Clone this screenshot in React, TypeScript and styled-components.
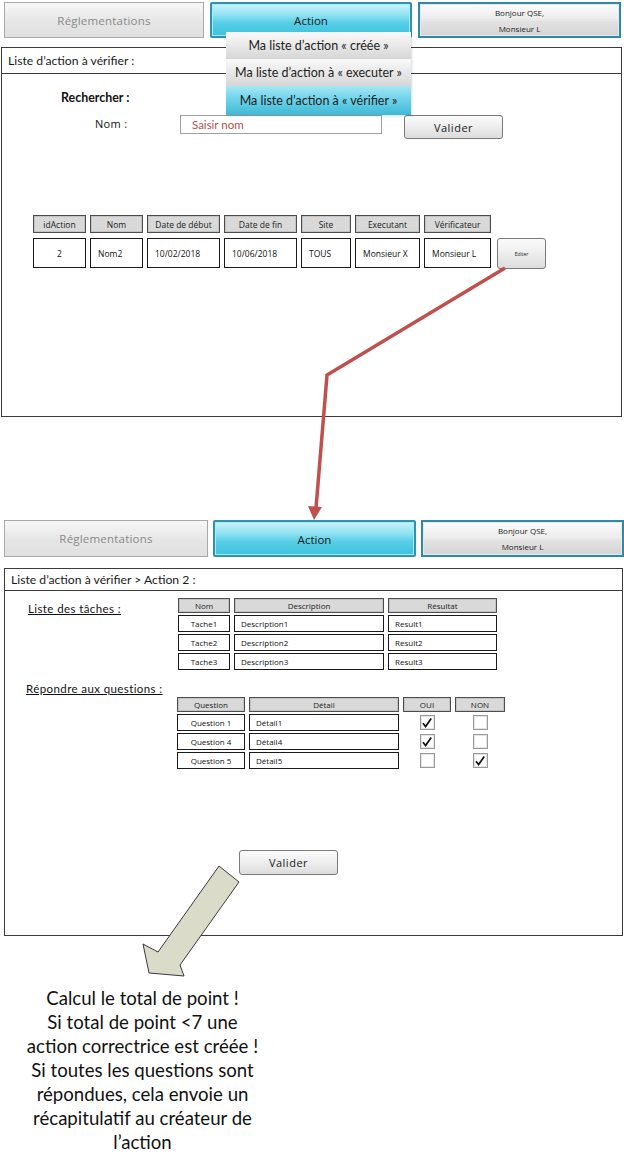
import React from 'react';
import styled, { createGlobalStyle } from 'styled-components';

const GlobalStyle = createGlobalStyle`
  html, body { margin: 0; padding: 0; background: #ffffff; }
  body { font-family: "Open Sans", "DejaVu Sans", sans-serif; color: #1a1a1a; }
  * { box-sizing: border-box; }
`;

const Page = styled.div`
  position: relative;
  width: 624px;
  height: 1164px;
  overflow: hidden;
  background: #fff;
`;

const Screen = styled.section<{ $mt: number; $ml: number }>`
  margin-top: ${(p) => p.$mt}px;
  padding-left: ${(p) => p.$ml}px;
`;

const TabBar = styled.div<{ $h: number; $gap: number }>`
  display: flex;
  gap: ${(p) => p.$gap}px;
  height: ${(p) => p.$h}px;
  padding-left: 4px;
`;

const GrayTab = styled.div<{ $w: number }>`
  width: ${(p) => p.$w}px;
  height: 100%;
  border: 1px solid #a9a9a9;
  background: linear-gradient(#f7f7f7, #e6e6e6 55%, #e0e0e0);
  display: flex;
  align-items: center;
  justify-content: center;
  font-size: 11.5px;
  color: #8a8a8a;
  letter-spacing: 0.2px;
`;

const ActionTab = styled.div<{ $w: number }>`
  position: relative;
  width: ${(p) => p.$w}px;
  height: 100%;
  border: 2px solid #2f93ad;
  border-radius: 2px;
  background: linear-gradient(#c9f3fa 0%, #8fe2f2 35%, #56cde6 60%, #3fc2df 100%);
  box-shadow: inset 0 0 0 1px #a6ecf7;
  display: flex;
  align-items: center;
  justify-content: center;
  padding-top: 1px;
  font-size: 11.5px;
  color: #1b1b1b;
`;

const UserTab = styled.div<{ $w: number }>`
  width: ${(p) => p.$w}px;
  height: 100%;
  border: 2px solid #2f8ba3;
  background: #f2f2f2;
  display: grid;
  grid-template-rows: 1fr 1fr;
`;

const UserLine = styled.div<{ $shade: boolean }>`
  display: flex;
  align-items: center;
  justify-content: center;
  font-size: 8px;
  color: #222;
  background: ${(p) => (p.$shade ? 'linear-gradient(#e2e2e2, #d6d6d6)' : 'linear-gradient(#fbfbfb, #ececec)')};
  border: 1px solid #e8e8e8;
`;

const Dropdown = styled.div`
  position: absolute;
  left: 14px;
  top: 28px;
  width: 185px;
  z-index: 5;
  display: flex;
  flex-direction: column;
  box-shadow: 1px 1px 2px rgba(0, 0, 0, 0.15);
`;

const DropItem = styled.div<{ $active?: boolean; $h: number }>`
  height: ${(p) => p.$h}px;
  display: flex;
  align-items: center;
  justify-content: center;
  font-family: "Lato", "Open Sans", sans-serif;
  font-size: 12.5px;
  color: #1e1e1e;
  background: ${(p) =>
    p.$active
      ? 'linear-gradient(#a5e8f4, #6fd3e9 45%, #3eb9d6 100%)'
      : 'linear-gradient(#fafafa, #e8e8e8 50%, #d6d6d6 100%)'};
`;

const Panel = styled.div<{ $mt: number; $w: number; $h: number; $ml: number }>`
  margin-top: ${(p) => p.$mt}px;
  margin-left: ${(p) => p.$ml}px;
  width: ${(p) => p.$w}px;
  height: ${(p) => p.$h}px;
  border: 1px solid #3a3a3a;
  display: flex;
  flex-direction: column;
`;

const PanelHeader = styled.div<{ $h: number }>`
  height: ${(p) => p.$h}px;
  flex: none;
  border-bottom: 1px solid #3a3a3a;
  display: flex;
  align-items: center;
  padding-left: 6px;
  font-family: "Lato", "Open Sans", sans-serif;
  font-size: 12.2px;
  color: #1a1a1a;
`;

const PanelBody = styled.div<{ $pt: number }>`
  display: flex;
  flex-direction: column;
  padding-top: ${(p) => p.$pt}px;
`;

const SectionTitle = styled.div`
  margin-left: 59px;
  font-family: "Lato", "Open Sans", sans-serif;
  font-weight: 700;
  font-size: 12.4px;
  line-height: 15px;
  color: #111;
`;

const SearchRow = styled.div`
  margin-top: 10px;
  display: flex;
  align-items: flex-start;
  padding-left: 93px;
`;

const FieldLabel = styled.div`
  width: 85px;
  line-height: 18px;
  font-size: 11px;
  letter-spacing: 0.3px;
  color: #111;
`;

const TextInput = styled.div`
  width: 202px;
  height: 19px;
  border: 1px solid #a0a0a0;
  padding-left: 11px;
  display: flex;
  align-items: center;
  font-family: "Lato", "Open Sans", sans-serif;
  font-size: 11.5px;
  color: #b5504a;
`;

const Button = styled.div<{ $w: number; $h: number; $small?: boolean }>`
  width: ${(p) => p.$w}px;
  height: ${(p) => p.$h}px;
  border: 1px solid #7a7a7a;
  border-radius: 3px;
  background: linear-gradient(#fbfbfb, #efefef 45%, #dcdcdc 100%);
  display: flex;
  align-items: center;
  justify-content: center;
  font-size: ${(p) => (p.$small ? '5px' : '11px')};
  letter-spacing: ${(p) => (p.$small ? '0' : '0.5px')};
  color: #1a1a1a;
  flex: none;
`;

const SearchButton = styled(Button)`
  margin-left: 22px;
`;

const ActionTable = styled.div`
  margin-top: 76px;
  margin-left: 31px;
  display: grid;
  grid-template-columns: 53px 53px 73px 73px 50px 65px 67px 51px;
  grid-template-rows: 18px 30px;
  column-gap: 4px;
  row-gap: 5px;
`;

const HeadCell = styled.div`
  border: 1px solid #4d4d4d;
  background: #d9d9d9;
  box-shadow: inset 0 0 0 1px #c4c4c4;
  display: flex;
  align-items: center;
  justify-content: center;
  font-size: 8.5px;
  color: #222;
  white-space: nowrap;
`;

const Cell = styled.div<{ $center?: boolean; $pad?: number }>`
  border: 1px solid #1a1a1a;
  background: #fff;
  display: flex;
  align-items: center;
  justify-content: ${(p) => (p.$center ? 'center' : 'flex-start')};
  padding-left: ${(p) => (p.$center ? 0 : p.$pad ?? 7)}px;
  font-size: 8.5px;
  color: #111;
  white-space: nowrap;
`;

const EditCell = styled.div`
  padding-left: 2px;
`;

const TaskSection = styled.div`
  display: flex;
  align-items: flex-start;
  padding-left: 23px;
`;

const UnderTitle = styled.div<{ $w?: number; $pt?: number }>`
  width: ${(p) => (p.$w ? `${p.$w}px` : 'auto')};
  padding-top: ${(p) => p.$pt ?? 0}px;
  font-family: "Lato", "Open Sans", sans-serif;
  font-size: 11.5px;
  letter-spacing: 0.4px;
  text-decoration: underline;
  color: #111;
  flex: none;
`;

const SmallTable = styled.div<{ $cols: string; $ml: number }>`
  margin-left: ${(p) => p.$ml}px;
  display: grid;
  grid-template-columns: ${(p) => p.$cols};
  grid-auto-rows: 17px;
  grid-template-rows: 15px;
  column-gap: 4px;
  row-gap: 2px;
  & > .head { margin-bottom: 2px; }
`;

const SmallHead = styled(HeadCell)`
  height: 15px;
  font-size: 8px;
`;

const SmallCell = styled(Cell)`
  height: 17px;
  font-size: 8px;
`;

const QuestionBlock = styled.div`
  margin-top: 12px;
  padding-left: 21px;
  display: flex;
  flex-direction: column;
`;

const QuestionTableWrap = styled.div`
  margin-top: 2px;
`;

const CheckCell = styled.div`
  display: flex;
  align-items: center;
  justify-content: center;
`;

const CheckBox = styled.div`
  width: 15px;
  height: 15px;
  border: 1px solid #9a9a9a;
  background: #fff;
  box-shadow: inset 0 0 0 1px #e4e4e4;
  display: flex;
  align-items: center;
  justify-content: center;
`;

const ValidateRow = styled.div`
  margin-top: 81px;
  padding-left: 234px;
`;

const Note = styled.div`
  margin-top: 50px;
  width: 285px;
  text-align: center;
  font-family: "Lato", "Open Sans", sans-serif;
  font-size: 18.6px;
  line-height: 24px;
  color: #111;
`;

const Overlay = styled.svg`
  position: absolute;
  left: 0;
  top: 0;
  pointer-events: none;
  z-index: 10;
`;

const Check = ({ on }: { on: boolean }) => (
  <CheckBox>
    {on && (
      <svg width="12" height="12" viewBox="0 0 12 12">
        <path d="M2 6.2 L4.6 9.6 L10.2 1.6" fill="none" stroke="#111" strokeWidth="1.7" />
      </svg>
    )}
  </CheckBox>
);

const actionHeads = ['idAction', 'Nom', 'Date de début', 'Date de fin', 'Site', 'Executant', 'Vérificateur'];
const actionRow = ['2', 'Nom2', '10/02/2018', '10/06/2018', 'TOUS', 'Monsieur X', 'Monsieur L'];

const tasks = [
  ['Tache1', 'Description1', 'Result1'],
  ['Tache2', 'Description2', 'Result2'],
  ['Tache3', 'Description3', 'Result3'],
];

const questions: [string, string, boolean, boolean][] = [
  ['Question 1', 'Détail1', true, false],
  ['Question 4', 'Détail4', true, false],
  ['Question 5', 'Détail5', false, true],
];

export default function App() {
  return (
    <Page>
      <GlobalStyle />
      <Screen $mt={2} $ml={0}>
        <TabBar $h={36} $gap={6}>
          <GrayTab $w={200}>Réglementations</GrayTab>
          <ActionTab $w={202}>
            Action
            <Dropdown>
              <DropItem $h={27}>Ma liste d’action « créée »</DropItem>
              <DropItem $h={27}>Ma liste d’action à « executer »</DropItem>
              <DropItem $h={29} $active>
                Ma liste d’action à « vérifier »
              </DropItem>
            </Dropdown>
          </ActionTab>
          <UserTab $w={203}>
            <UserLine $shade={false}>Bonjour QSE,</UserLine>
            <UserLine $shade>Monsieur L</UserLine>
          </UserTab>
        </TabBar>
        <Panel $mt={9} $ml={1} $w={621} $h={370}>
          <PanelHeader $h={26}>Liste d’action à vérifier :</PanelHeader>
          <PanelBody $pt={16}>
            <SectionTitle>Rechercher :</SectionTitle>
            <SearchRow>
              <FieldLabel>Nom :</FieldLabel>
              <TextInput>Saisir nom</TextInput>
              <SearchButton $w={99} $h={24}>
                Valider
              </SearchButton>
            </SearchRow>
            <ActionTable>
              {actionHeads.map((h) => (
                <HeadCell key={h}>{h}</HeadCell>
              ))}
              <div />
              {actionRow.map((v, i) => (
                <Cell key={i} $center={i === 0}>
                  {v}
                </Cell>
              ))}
              <EditCell>
                <Button $w={49} $h={31} $small>
                  Editer
                </Button>
              </EditCell>
            </ActionTable>
          </PanelBody>
        </Panel>
      </Screen>

      <Screen $mt={103} $ml={0}>
        <TabBar $h={37} $gap={5}>
          <GrayTab $w={204}>Réglementations</GrayTab>
          <ActionTab $w={203}>Action</ActionTab>
          <UserTab $w={203}>
            <UserLine $shade={false}>Bonjour QSE,</UserLine>
            <UserLine $shade>Monsieur L</UserLine>
          </UserTab>
        </TabBar>
        <Panel $mt={11} $ml={4} $w={619} $h={368}>
          <PanelHeader $h={22}>Liste d’action à vérifier &gt; Action 2 :</PanelHeader>
          <PanelBody $pt={7}>
            <TaskSection>
              <UnderTitle $w={150} $pt={4}>
                Liste des tâches :
              </UnderTitle>
              <SmallTable $cols="52px 150px 109px" $ml={0}>
                <SmallHead className="head">Nom</SmallHead>
                <SmallHead className="head">Description</SmallHead>
                <SmallHead className="head">Résultat</SmallHead>
                {tasks.map((t) => (
                  <React.Fragment key={t[0]}>
                    <SmallCell $center>{t[0]}</SmallCell>
                    <SmallCell $pad={6}>{t[1]}</SmallCell>
                    <SmallCell $pad={6}>{t[2]}</SmallCell>
                  </React.Fragment>
                ))}
              </SmallTable>
            </TaskSection>
            <QuestionBlock>
              <UnderTitle>Répondre aux questions :</UnderTitle>
              <QuestionTableWrap>
                <SmallTable $cols="68px 150px 48px 50px" $ml={151}>
                  <SmallHead className="head">Question</SmallHead>
                  <SmallHead className="head">Détail</SmallHead>
                  <SmallHead className="head">OUI</SmallHead>
                  <SmallHead className="head">NON</SmallHead>
                  {questions.map((q) => (
                    <React.Fragment key={q[0]}>
                      <SmallCell $center>{q[0]}</SmallCell>
                      <SmallCell $pad={6}>{q[1]}</SmallCell>
                      <CheckCell>
                        <Check on={q[2]} />
                      </CheckCell>
                      <CheckCell>
                        <Check on={q[3]} />
                      </CheckCell>
                    </React.Fragment>
                  ))}
                </SmallTable>
              </QuestionTableWrap>
            </QuestionBlock>
            <ValidateRow>
              <Button $w={99} $h={25}>
                Valider
              </Button>
            </ValidateRow>
          </PanelBody>
        </Panel>
      </Screen>

      <Note>
        Calcul le total de point !<br />
        Si total de point &lt;7 une
        <br />
        action correctrice est créée !<br />
        Si toutes les questions sont
        <br />
        répondues, cela envoie un
        <br />
        récapitulatif au créateur de
        <br />
        l’action
      </Note>

      <Overlay width="624" height="1164" viewBox="0 0 624 1164">
        <polyline
          points="505,268 327,375 316,508"
          fill="none"
          stroke="#c0504d"
          strokeWidth="3.5"
          strokeLinejoin="miter"
        />
        <polygon points="308,506 322,507 314,520" fill="#c0504d" />
        <polygon
          points="219,866 239,882 180,965 184,976 149,973 143,944 158,952"
          fill="#dadbc8"
          stroke="#3a3a3a"
          strokeWidth="1"
          strokeLinejoin="miter"
        />
      </Overlay>
    </Page>
  );
}
